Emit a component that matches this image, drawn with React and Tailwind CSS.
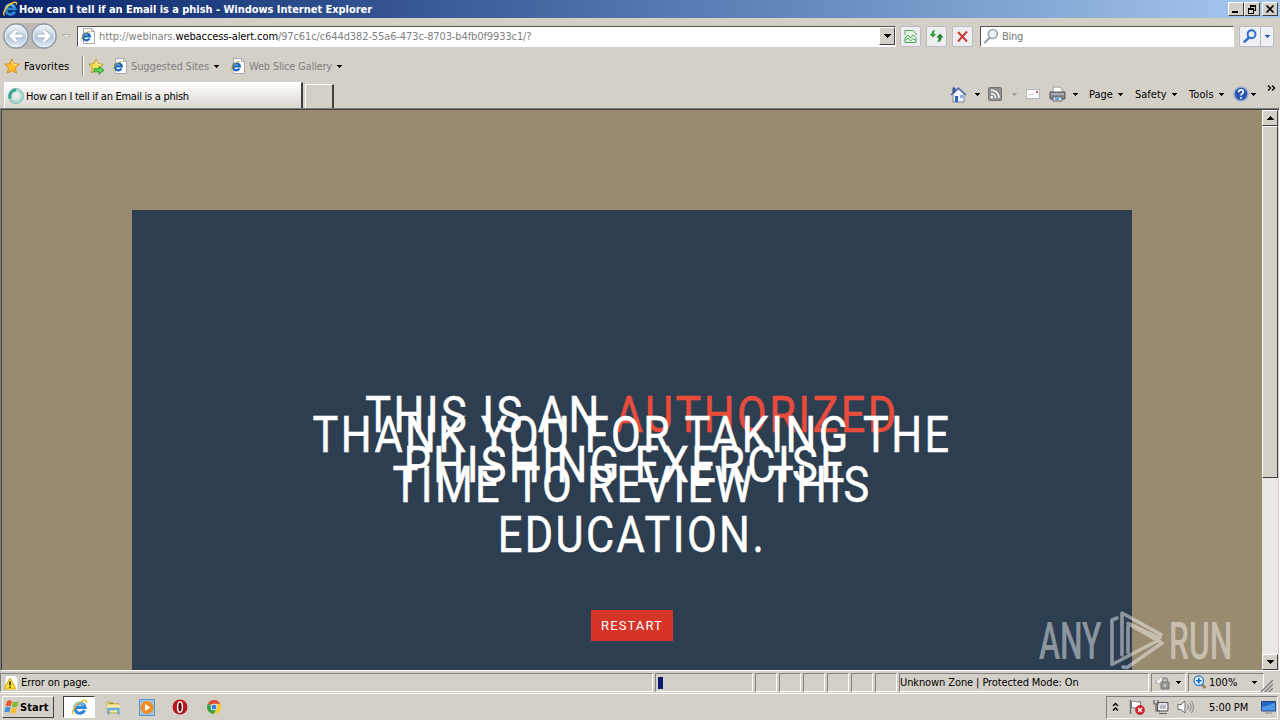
import React from 'react';

function Caret({ className = '' }) {
    return (
        <svg className={`shrink-0 ${className}`} width="5" height="3" viewBox="0 0 5 3" fill="currentColor" shapeRendering="crispEdges">
            <path d="M0 0h5v1H4v1H3v1H2V2H1V1H0z" />
        </svg>
    );
}

function IeGlyph({ className = '', size = 16 }) {
    return (
        <svg className={`shrink-0 ${className}`} width={size} height={size} viewBox="0 0 16 16" fill="none">
            <path d="M12.800 10.600A4.800 4.800 0 1 1 13.200 7.900H4.600" stroke="#2b86d6" strokeWidth="2.900" />
            <path d="M12 6A4.600 4.600 0 0 0 3.600 6.400" stroke="#7fd0fa" strokeWidth="1.200" />
            <path d="M2.600 14.200C-.6 13 4.800 4.200 10.200 2c3-1.400 5-1 4.200 1.700" stroke="#f0c02c" strokeWidth="1.500" />
        </svg>
    );
}

// Sheet of paper with the browser logo on it
function IePage({ className = '' }) {
    return (
        <svg className={`shrink-0 ${className}`} width="16" height="16" viewBox="0 0 16 16" fill="none">
            <path d="M3.500 .5h8l3 3v12h-11z" fill="#fff" stroke="#a7a9ac" />
            <path d="M11.500 .5v3h3" stroke="#a7a9ac" />
            <path d="M9.500 10.500A3.500 3.500 0 1 1 9.900 8.400H3.800" stroke="#1767bd" strokeWidth="2.200" />
            <path d="M1.600 12.600C.2 11 4 5.300 7.600 3.800c1.600-.6 2.600-.4 2.500.7" stroke="#e0ad20" />
        </svg>
    );
}

function NavCircle({ flip }) {
    return (
        <svg className={flip ? 'shrink-0 -scale-x-100' : 'shrink-0'} width="26" height="26" viewBox="0 0 26 26">
            <defs>
                <linearGradient id="navFill" x1="0" y1="0" x2="0" y2="1">
                    <stop offset="0" stopColor="#f4f7fa" />
                    <stop offset=".45" stopColor="#c9d5e2" />
                    <stop offset=".55" stopColor="#b4c6da" />
                    <stop offset="1" stopColor="#e4f3fc" />
                </linearGradient>
            </defs>
            <circle cx="13" cy="13" r="12" fill="url(#navFill)" stroke="#8f9aa8" strokeWidth="1.400" />
            <circle cx="13" cy="13" r="10.700" fill="none" stroke="#eef4f9" />
            <path d="M13.500 7.500 8 13l5.500 5.500M8.500 13H20" fill="none" stroke="#9cabbd" strokeWidth="4.400" />
            <path d="M13.500 7.500 8 13l5.500 5.500M8.500 13h11" fill="none" stroke="#fff" strokeWidth="3" />
        </svg>
    );
}

function Star({ arrow }) {
    return (
        <svg className="shrink-0" width="17" height="17" viewBox="0 0 17 17">
            <path d="M8 1l2.100 4.700 5.100.6-3.800 3.500 1 5.200L8 12.500 3.500 15l1-5.200L.8 6.300l5.100-.6z" fill={arrow ? '#f3e056' : '#fdbd2c'} stroke={arrow ? '#b99a1c' : '#d98712'} strokeWidth=".9" />
            <path d="M8 3l1.400 3.500 3.400.4" fill="none" stroke="#fff1a8" />
            {arrow && <path d="M6 10.800h5V8.300l5 4-5 4v-2.500H6z" fill="#5fd45c" stroke="#21862d" strokeWidth=".8" />}
        </svg>
    );
}

function ToolButton({ children }) {
    return (
        <div className="flex h-[21px] w-[21px] items-center justify-center rounded-[2px] border border-[#b9bcc2] bg-[#eeeef0]">
            {children}
        </div>
    );
}

function Magnifier({ color, fill = '#e8f0f8', size = 16, handle = 2.2 }) {
    return (
        <svg className="shrink-0" width={size} height={size} viewBox="0 0 16 16">
            <path d="M7 9.500 1.800 14.500" stroke={color} strokeWidth={handle} strokeLinecap="round" />
            <circle cx="9.800" cy="6" r="4.500" fill={fill} stroke={color} strokeWidth={handle * 0.75} />
        </svg>
    );
}

function WinButton({ children, className = '' }) {
    return (
        <div className={`flex h-[14px] w-[16px] items-center justify-center border border-t-white border-l-white border-r-[#404040] border-b-[#404040] bg-[#d4d0c8] ${className}`}>
            <svg width="12" height="11" viewBox="0 0 12 11" fill="none" stroke="#000" shapeRendering="crispEdges">{children}</svg>
        </div>
    );
}

function TitleBar() {
    return (
        <div className="flex h-[18px] items-center bg-linear-to-r from-[#0a246a] to-[#a6caf0] pr-[2px] pl-[2px]">
            <IeGlyph size={16} />
            <span className="ml-px text-[11px] font-bold tracking-[-0.04px] text-white">How can I tell if an Email is a phish - Windows Internet Explorer</span>
            <div className="ml-auto flex">
                <WinButton><path d="M2 8.500h6M2 7.500h6" /></WinButton>
                <WinButton>
                    <path d="M4 1h6M4 2h6M9.500 1v6M4.500 1v3M7 6.500h3" />
                    <path d="M2 4.500h6M2 5.500h6M7.500 4v6M2.500 4v6M2 9.500h6" />
                </WinButton>
                <WinButton className="ml-[2px]"><path d="M2.500 1.500l7 7M9.500 1.500l-7 7" strokeWidth="1.600" shapeRendering="auto" /></WinButton>
            </div>
        </div>
    );
}

function AddressRow() {
    return (
        <div className="flex h-[36px] items-center pl-[3px]">
            <div className="flex items-center gap-[2px] rounded-full bg-[#bdb9b9]">
                <NavCircle />
                <NavCircle flip />
            </div>
            <svg className="ml-[5px]" width="9" height="5" viewBox="0 0 9 5"><path d="M.5.5h8l-4 4z" fill="#e9e7e4" stroke="#aaa7a2" strokeWidth=".8" /></svg>
            <div className="ml-[6px] flex h-[21px] w-[819px] items-center border border-t-[#555] border-l-[#555] border-r-white border-b-white bg-white pl-[2px]">
                <IePage />
                <span className="ml-[3px] text-[11px] tracking-[-0.11px] text-[#808080]">
                    http://webinars.<span className="text-black">webaccess-alert.com</span>/97c61c/c644d382-55a6-473c-8703-b4fb0f9933c1/?
                </span>
                <div className="ml-auto flex h-[18px] w-[16px] items-center justify-center border border-t-white border-l-white border-r-[#404040] border-b-[#404040] bg-[#d4d0c8]">
                    <svg width="7" height="4" viewBox="0 0 7 4" shapeRendering="crispEdges"><path d="M0 0h7L3.500 4z" /></svg>
                </div>
            </div>
            <div className="ml-[4px] flex gap-[5px]">
                <ToolButton>
                    <svg width="13" height="15" viewBox="0 0 13 15" fill="none" stroke="#4ba65a">
                        <path d="M1 6V1.500h8l3 3V6M1 9v4.500h11V9" fill="#e6f5e6" />
                        <path d="M1 9l3-3 2.500 3L9 6l3 2.500M1 11.500l3-2.500 2.500 3L9 9.500l3 2" />
                    </svg>
                </ToolButton>
                <ToolButton>
                    <svg width="15" height="15" viewBox="0 0 15 15">
                        <path d="M3.800 8.500L.5 5h2C2.500 2.500 4 1 6.500 1 5 2 5 3 5.200 5h2z" fill="#2d9e3a" />
                        <path d="M11 4.500 14.500 8.500h-2c0 3-1.500 4.500-4.300 4.500C9.600 12 9.600 10.500 9.400 8.500h-2z" fill="#208230" />
                    </svg>
                </ToolButton>
                <ToolButton>
                    <svg width="13" height="13" viewBox="0 0 13 13"><path d="M2 2l9 9.500M11 1.500 2 11.500" stroke="#c93b3b" strokeWidth="2" /></svg>
                </ToolButton>
            </div>
            <div className="ml-[7px] flex h-[21px] w-[254px] items-center border border-t-[#555] border-l-[#555] border-r-white border-b-white bg-white pl-[2px]">
                <Magnifier color="#9aa4ad" />
                <span className="ml-[3px] text-[11px] tracking-[-0.3px] text-[#767676]">Bing</span>
            </div>
            <div className="ml-[5px] flex h-[21px] w-[35px] rounded-[2px] border border-[#b9bcc2] bg-[#eef0f4]">
                <div className="flex w-[21px] items-center justify-center border-r border-[#b9bcc2]"><Magnifier color="#2f6bd0" size={14} fill="#e2eefc" handle={2.9} /></div>
                <div className="flex flex-1 items-center justify-center text-[#2a5ba8]"><Caret /></div>
            </div>
        </div>
    );
}

function FavoritesRow() {
    return (
        <div className="flex h-[26px] items-center pb-[2px] pl-[4px] text-[11px]">
            <Star />
            <span className="ml-[3px] w-[58px] tracking-[0.08px]">Favorites</span>
            <div className="h-[20px] w-[2px] border-r border-l border-r-white border-l-[#808080]" />
            <div className="ml-[4px] flex"><Star arrow /></div>
            <IePage className="ml-[7px]" />
            <span className="ml-[3px] w-[83px] tracking-[-0.12px] text-[#808080]">Suggested Sites</span>
            <Caret />
            <IePage className="ml-[11px]" />
            <span className="ml-[3px] w-[88px] tracking-[-0.2px] text-[#808080]">Web Slice Gallery</span>
            <Caret />
        </div>
    );
}

function CommandBar() {
    return (
        <div className="ml-auto flex h-[28px] w-[330px] items-center text-[11px]">
            <svg width="17" height="17" viewBox="0 0 17 17">
                <path d="M3 8v8h11V8L8.500 3z" fill="#f4f5fa" stroke="#7482a3" />
                <path d="M1 9l7.500-7 7.500 7" fill="none" stroke="#5570a8" strokeWidth="1.600" />
                <path d="M2.500 1.500h3v4l-3 2.500z" fill="#3c50a0" />
                <path d="M5 10h3v6H5z" fill="#2c65b8" />
                <path d="M10 9h3v3h-3z" fill="#84b0e4" />
            </svg>
            <Caret className="ml-[8px]" />
            <svg className="ml-[8px]" width="14" height="14" viewBox="0 0 14 14" fill="none">
                <rect x=".5" y=".5" width="13" height="13" rx="1.500" fill="#909090" stroke="#747474" />
                <path d="M3 6.500a4.500 4.500 0 0 1 4.500 4.500M3 3a8 8 0 0 1 8 8" stroke="#fff" strokeWidth="1.500" />
                <circle cx="3.800" cy="10.300" r="1.200" fill="#fff" />
            </svg>
            <Caret className="ml-[10px] text-[#a5a19b]" />
            <svg className="ml-[9px]" width="14" height="10" viewBox="0 0 14 10">
                <rect x=".5" y=".5" width="13" height="9" fill="#fbfbfb" stroke="#b5b5b5" />
                <path d="M10 2h2v2h-2z" fill="#c65b5b" /><path d="M2 5.500h6" stroke="#d5d5d5" />
            </svg>
            <svg className="ml-[9px]" width="17" height="16" viewBox="0 0 17 16">
                <path d="M4 1h7l2 2v4H4z" fill="#fff" stroke="#969696" />
                <path d="M1 6h15v7H1z" fill="#84878c" stroke="#55585c" />
                <path d="M2 8h13" stroke="#d6d8da" />
                <path d="M4 11h9v4H4z" fill="#dfe8f2" stroke="#5f6268" /><path d="M6 13h4" stroke="#3a83cc" strokeWidth="1.500" />
            </svg>
            <Caret className="ml-[7px]" />
            <span className="ml-[11px] w-[29px]">Page</span><Caret />
            <span className="ml-[12px] w-[37px]">Safety</span><Caret />
            <span className="ml-[12px] w-[30px] tracking-[0.1px]">Tools</span><Caret />
            <svg className="ml-[9px]" width="16" height="16" viewBox="0 0 16 16" fill="none">
                <circle cx="8" cy="8" r="7" fill="#2858b4" stroke="#a0add0" strokeWidth="1.500" />
                <path d="M5.600 6.200C5.800 3 10.600 3.300 10.300 6 10.100 7.600 8 7.700 8 9.600M8 11v1.700" stroke="#fff" strokeWidth="1.700" />
            </svg>
            <Caret className="ml-[2px]" />
            <svg className="mb-[13px] ml-[11px]" width="9" height="6" viewBox="0 0 9 6" fill="none"><path d="M1 .5 3.500 3 1 5.500M5 .5 7.500 3 5 5.500" stroke="#000" strokeWidth="1.300" /></svg>
        </div>
    );
}

function TabRow() {
    return (
        <div className="flex h-[28px] items-end">
            <div className="ml-[4px] flex h-[26px] w-[299px] items-center border-t border-r-2 border-l border-t-white border-r-[#404040] border-l-white bg-linear-to-b from-white to-[#d9d6cf] pt-px pl-[3px]">
                <svg className="shrink-0" width="16" height="16" viewBox="0 0 16 16" fill="none">
                    <circle cx="8" cy="8" r="6" stroke="#a9dcd6" strokeWidth="3.400" />
                    <path d="M8 2a6 6 0 0 0-5.500 8.500" stroke="#3aa796" strokeWidth="3" />
                    <circle cx="8" cy="8" r="7.600" stroke="#6ea59f" strokeWidth=".6" />
                </svg>
                <span className="ml-[2px] text-[11px] tracking-[-0.27px]">How can I tell if an Email is a phish</span>
            </div>
            <div className="ml-[2px] h-[24px] w-[29px] border-t border-r-2 border-l border-t-white border-r-[#404040] border-l-white" />
            <CommandBar />
        </div>
    );
}

function ScrollButton({ down }) {
    return (
        <div className="flex h-[16px] w-[16px] shrink-0 items-center justify-center border border-t-white border-l-white border-r-[#404040] border-b-[#404040] bg-[#d4d0c8]">
            <svg className={down ? '' : 'rotate-180'} width="7" height="4" viewBox="0 0 7 4" shapeRendering="crispEdges"><path d="M0 0h7v1H6v1H5v1H4v1H3V3H2V2H1V1H0z" /></svg>
        </div>
    );
}

// Both slides are visible at once, stacked on top of each other
function Slides() {
    return (
        <div className="relative mx-auto mt-[100px] h-[460px] w-[1000px] bg-[#2c3e50] font-['Roboto'] text-[50px] leading-[50px] tracking-[2.800px] whitespace-nowrap text-white">
            <div className="absolute inset-x-0 top-[180px] scale-x-[0.865] text-center [-webkit-text-stroke:0.5px]">
                THIS IS AN <span className="text-[#e74c3c]">AUTHORIZED</span><br />
                PHISHING EXERCISE&nbsp;
            </div>
            <div className="absolute inset-x-0 top-[200px] scale-x-[0.865] text-center [-webkit-text-stroke:0.5px]">
                THANK YOU FOR TAKING THE<br />
                TIME TO REVIEW THIS<br />
                EDUCATION.
            </div>
            <button className="absolute top-[400px] left-[459px] h-[31px] w-[82px] bg-[#d63426] text-center font-['Roboto'] text-[13px] leading-[31px] tracking-[1.1px] text-white">RESTART</button>
        </div>
    );
}

function Watermark() {
    return (
        <div className="absolute top-[611px] left-[1039px] flex h-[62px] w-[194px] items-center font-['Roboto'] text-[52px] leading-none font-medium text-white opacity-45">
            <div className="w-[64px]"><span className="inline-block origin-left scale-x-[0.61]">ANY</span></div>
            <svg className="-mt-[2px] shrink-0" width="64" height="62" viewBox="0 0 64 62" fill="none" stroke="#fff" strokeWidth="3.600" strokeLinejoin="round" strokeLinecap="round">
                <path d="M14 8 9 10v44.500L54 31M19 45V3l39 21.500-1.500 3.500L25 13.500v29M25 13.500l34 19.500L24 57.500l-4-.5" />
            </svg>
            <div className="ml-[2px] w-[64px]"><span className="inline-block origin-left scale-x-[0.61]">RUN</span></div>
        </div>
    );
}

function PageView() {
    return (
        <div className="flex h-[563px] border-t border-r border-b border-l border-t-[#808080] border-r-white border-b-white border-l-[#808080]">
            <div className="flex flex-1 border-t border-l border-[#404040]">
                <div className="flex-1 overflow-hidden bg-[#988b70]">
                    <Slides />
                </div>
                <div className="mr-px flex w-[16px] flex-col bg-[#eae8e4]">
                    <ScrollButton />
                    <div className="h-[352px] border border-t-white border-l-white border-r-[#404040] border-b-[#404040] bg-[#d4d0c8]" />
                    <div className="flex-1" />
                    <ScrollButton down />
                </div>
            </div>
        </div>
    );
}

function StatusBar() {
    const cell = 'flex h-[19px] items-center border border-t-[#808080] border-l-[#808080] border-r-white border-b-white pt-px';
    return (
        <div className="flex h-[22px] items-center gap-[2px] text-[11px]">
            <div className={`${cell} w-[653px] pl-[2px]`}>
                <svg width="16" height="16" viewBox="0 0 16 16">
                    <path d="M2 .5h10l3 3v12H2z" fill="#fff" stroke="#c5c5c5" />
                    <path d="M7 3l6 11H1z" fill="#ffe32e" stroke="#c9a51a" strokeLinejoin="round" />
                    <path d="M7 6.500v4M7 11.500V13" stroke="#222" strokeWidth="1.500" />
                </svg>
                <span className="ml-[2px] tracking-[-0.08px]">Error on page.</span>
            </div>
            <div className={`${cell} w-[98px] pl-[2px]`}><div className="h-[12px] w-[5px] bg-[#0a1a6e]" /></div>
            {[0, 1, 2, 3, 4, 5].map((n) => <div key={n} className={`${cell} w-[22px]`} />)}
            <div className={`${cell} w-[250px] tracking-[-0.1px]`}>Unknown Zone | Protected Mode: On</div>
            <div className={`${cell} w-[35px] pl-[2px]`}>
                <svg width="17" height="15" viewBox="0 0 17 15" fill="none">
                    <path d="M1 7l6-5 4 2-3 6z" fill="#f3f3f3" stroke="#ababab" />
                    <path d="M8.500 7V5.500a2.500 2.500 0 0 1 5 0V7" stroke="#8b8b8b" strokeWidth="1.400" />
                    <path d="M7 7h8v7H7z" fill="#969696" stroke="#777" /><path d="M11 9v3" stroke="#fff" />
                </svg>
                <Caret className="ml-[5px]" />
            </div>
            <div className={`${cell} w-[76px] pl-[4px]`}>
                <svg width="14" height="15" viewBox="0 0 14 15" fill="none">
                    <path d="M8.500 9l4 4" stroke="#9a7b58" strokeWidth="2.500" />
                    <circle cx="5.800" cy="5.800" r="4.700" fill="#e9f5ff" stroke="#3986d0" strokeWidth="1.500" />
                    <path d="M3 5.800h5.600M5.800 3v5.600" stroke="#1765be" strokeWidth="1.600" />
                </svg>
                <span className="ml-[2px] w-[43px]">100%</span>
                <Caret />
            </div>
            <svg className="mt-[6px] -ml-[6px] shrink-0" width="13" height="13" viewBox="0 0 13 13" stroke="#808080"><path d="M1 13 13 1M5 13l8-8M9 13l4-4" strokeWidth="1.500" /></svg>
        </div>
    );
}

function TaskBar() {
    return (
        <div className="flex h-[27px] items-center border-t border-white pl-[2px] text-[11px]">
            <div className="flex h-[22px] w-[52px] items-center border border-t-white border-l-white border-r-[#404040] border-b-[#404040] pl-px">
                <svg className="shrink-0" width="16" height="16" viewBox="0 0 16 16">
                    <path d="M3 2c2-1.200 3.500-1 5 0L6.800 7.400c-1.500-1-3-1-5-.1z" fill="#e8562a" />
                    <path d="M9 2.400c2 1 3.500.9 5.600-.1l-1.300 5.200c-2 1-3.700 1-5.400.1z" fill="#7fba33" />
                    <path d="M1.500 8.400c2-1 3.500-.8 5 .1l-1.300 5c-1.500-1-3-1-5-.1z" fill="#3f8fda" />
                    <path d="M7.600 8.700c2 1 3.500.9 5.400 0l-1.300 5c-2 1-3.600 1-5.400.1z" fill="#f9be25" />
                </svg>
                <span className="font-bold tracking-[0.1px]">Start</span>
            </div>
            <div className="ml-[9px] flex h-[22px] w-[32px] items-center justify-center border border-t-[#404040] border-l-[#404040] border-r-white border-b-white bg-white">
                <IeGlyph size={17} />
            </div>
            <svg className="ml-[10px]" width="17" height="17" viewBox="0 0 17 17">
                <path d="M2 3h5l1 1.500h6V14H2z" fill="#f1d678" stroke="#c7a64a" strokeWidth=".8" />
                <path d="M2 6h13v7H2z" fill="#fae9a6" />
                <path d="M3.500 15.500V10h10v5.500" fill="none" stroke="#66acd9" strokeWidth="2.400" />
                <path d="M4 4.500h4" stroke="#63a84a" />
            </svg>
            <svg className="ml-[17px]" width="16" height="17" viewBox="0 0 16 17">
                <path d="M.5.5h15v16H.5z" fill="#9bc6ea" stroke="#5296cc" />
                <circle cx="8" cy="8.500" r="6.500" fill="#f28c1e" />
                <path d="M6 5l5.500 3.500L6 12z" fill="#fff" />
            </svg>
            <svg className="ml-[17px]" width="16" height="16" viewBox="0 0 16 16">
                <ellipse cx="8" cy="8" rx="7.500" ry="7.500" fill="#b5151c" />
                <ellipse cx="8" cy="8" rx="2.400" ry="5.300" fill="#5e0b0e" stroke="#fff" strokeWidth="1.500" />
            </svg>
            <svg className="ml-[19px]" width="14" height="14" viewBox="0 0 14 14">
                <circle cx="7" cy="7" r="7" fill="#f6c927" />
                <path d="M7 7 1 3.500A7 7 0 0 1 13.200 3.800H7z" fill="#dd4b3c" />
                <path d="M7 7 1 3.400A7 7 0 0 0 6.400 14L9.500 9z" fill="#38a253" />
                <circle cx="7" cy="7" r="3.300" fill="#fff" /><circle cx="7" cy="7" r="2.500" fill="#3f7fe0" />
            </svg>
            <div className="mr-[2px] ml-auto flex h-[23px] w-[172px] items-center border border-t-[#808080] border-l-[#808080] border-r-white border-b-white">
                <svg className="ml-[5px]" width="7" height="10" viewBox="0 0 7 10" fill="none" stroke="#000" strokeWidth="1.300"><path d="M1 4l2.500-2.500L6 4M1 8.500 3.500 6 6 8.500" /></svg>
                <svg className="ml-[10px]" width="16" height="16" viewBox="0 0 16 16" fill="none">
                    <path d="M1.500 1v14" stroke="#6d6d6d" strokeWidth="1.400" />
                    <path d="M2.500 2.500c3-1.500 4 1.500 9 0V9c-4 1.500-6-1.500-9 0z" fill="#fff" stroke="#777" />
                    <circle cx="11" cy="11" r="4.500" fill="#d8232a" stroke="#a31217" strokeWidth=".6" />
                    <path d="M9 9l4 4M13 9l-4 4" stroke="#fff" strokeWidth="1.400" />
                </svg>
                <svg className="ml-[8px]" width="16" height="16" viewBox="0 0 16 16" fill="none">
                    <path d="M4.500 3.500h10.500V12H4.500z" fill="#c9cbd0" stroke="#595959" /><path d="M6 5h7.500v5.500H6z" fill="#b6b8bf" stroke="#fff" />
                    <path d="M1 1v4h4V1M3 5v7h4M6 14.500h8" stroke="#5c5c5c" strokeWidth="1.200" />
                </svg>
                <svg className="ml-[8px]" width="17" height="16" viewBox="0 0 17 16" fill="none">
                    <path d="M1 5.500h3L8 2v12L4 10.500H1z" fill="#fff" stroke="#6e6e6e" />
                    <path d="M10.500 5.500c1 1.500 1 3.500 0 5M12.500 3.500c2 2.500 2 6.500 0 9M14.500 2c2.500 3.500 2.500 8.500 0 12" stroke="#818181" />
                </svg>
                <span className="ml-[15px] w-[52px] tracking-[-0.1px]">5:00 PM</span>
                <svg width="15" height="13" viewBox="0 0 15 13">
                    <path d="M.5.5h14v9.500H.5z" fill="#2566c4" stroke="#24467f" /><path d="M1 6 14 2v7.500H1z" fill="#4c97e4" /><path d="M4 12h7" stroke="#888" />
                </svg>
            </div>
        </div>
    );
}

export default function App() {
    return (
        <div className="relative flex h-[720px] w-[1280px] flex-col overflow-hidden bg-[#d4d0c8] font-['DejaVu_Sans_Condensed','DejaVu_Sans',sans-serif] leading-none whitespace-nowrap text-black">
            <TitleBar />
            <AddressRow />
            <FavoritesRow />
            <TabRow />
            <PageView />
            <StatusBar />
            <TaskBar />
            <Watermark />
        </div>
    );
}
